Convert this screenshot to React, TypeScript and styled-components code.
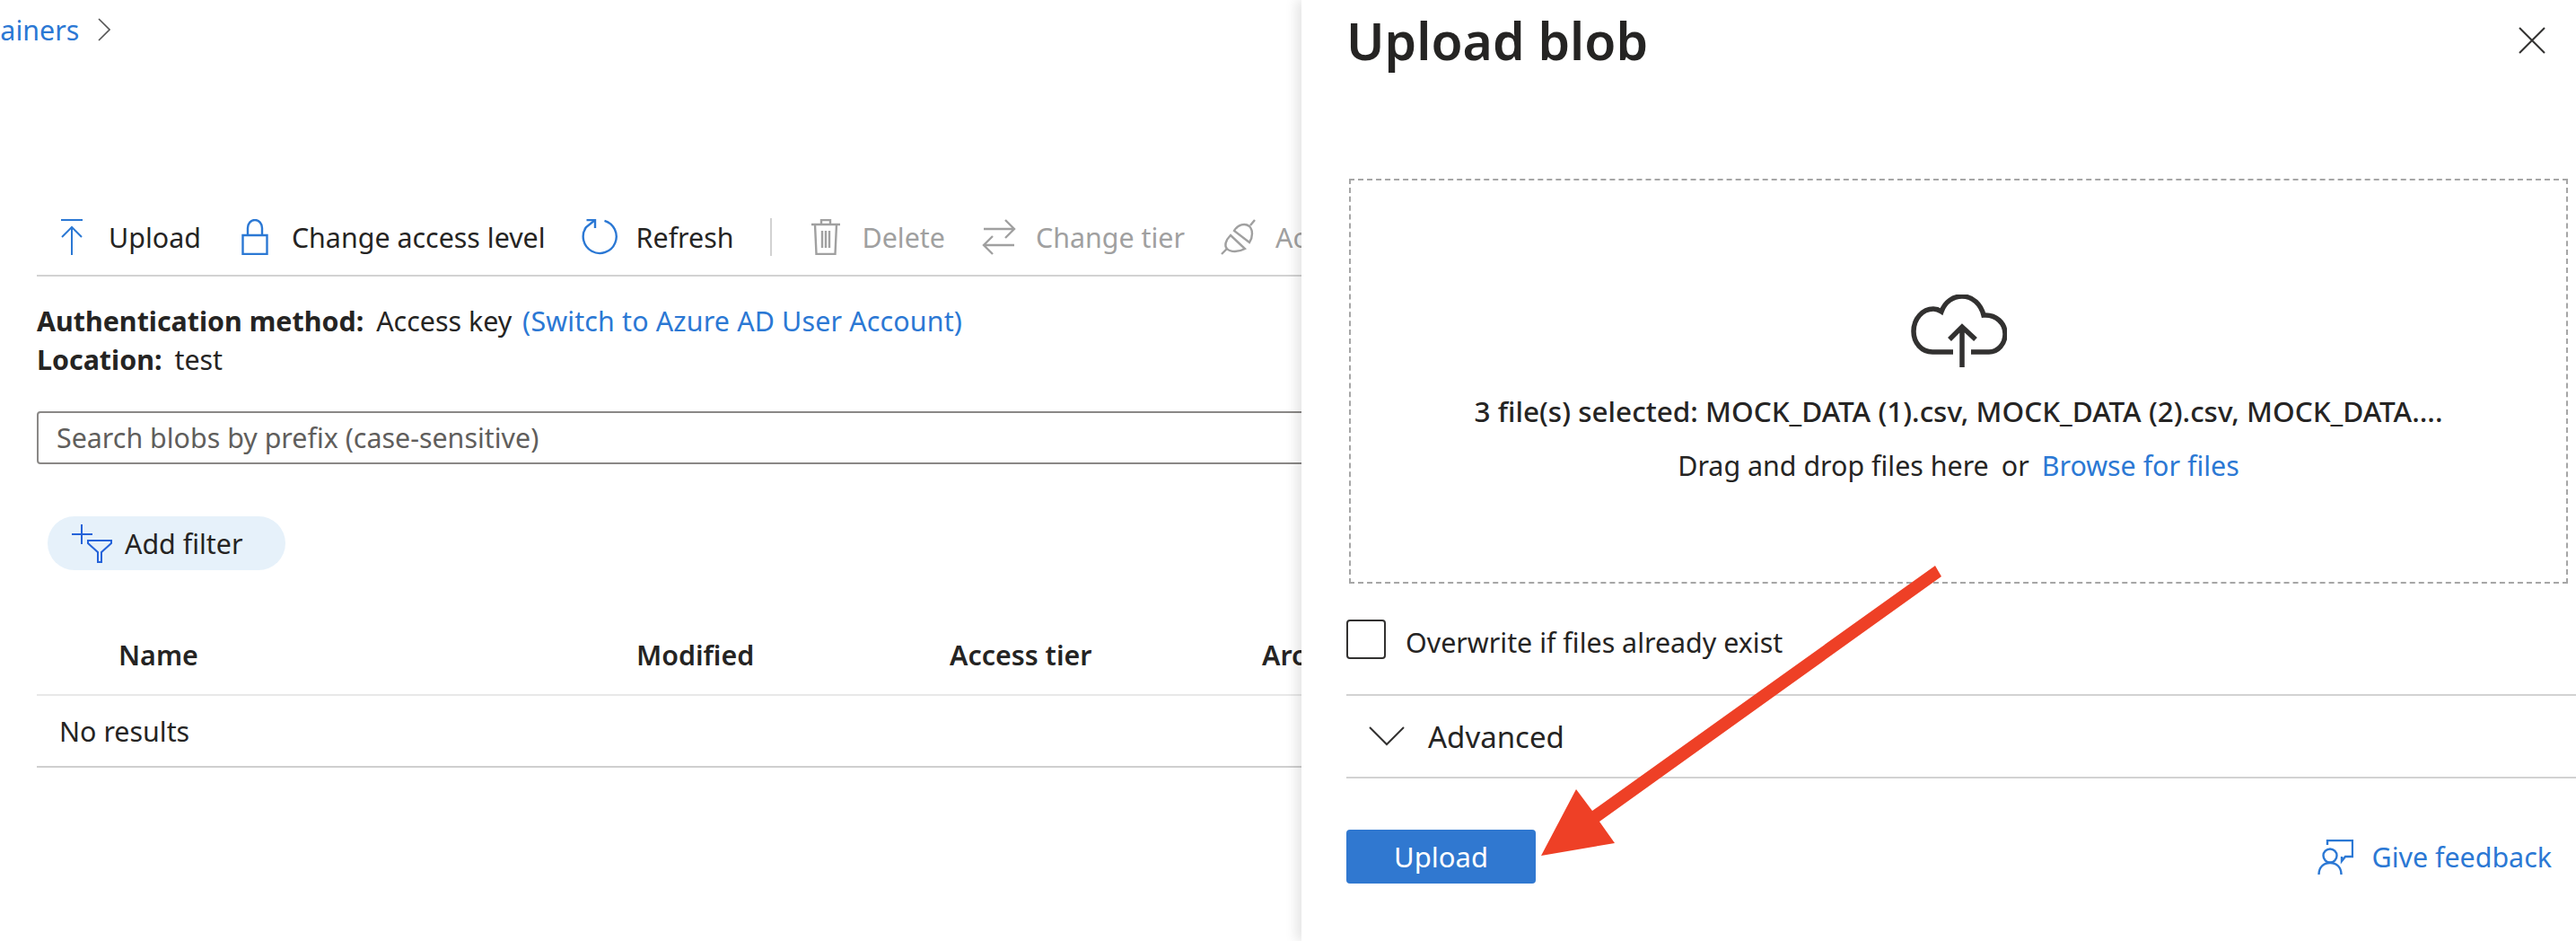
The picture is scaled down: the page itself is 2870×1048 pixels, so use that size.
import styled, { createGlobalStyle } from 'styled-components';

const GlobalStyle = createGlobalStyle`
  html, body {
    margin: 0;
    padding: 0;
    background: #fff;
  }
  * {
    box-sizing: border-box;
  }
`;

const UploadIcon = () => (
  <svg width="24" height="40" viewBox="0 0 24 40" fill="none" stroke="#2b78d4" strokeWidth="2">
    <path d="M0 1h24M12 40V9M1 20L12 9l11 11" />
  </svg>
);

const LockIcon = () => (
  <svg width="30" height="40" viewBox="0 0 30 40" fill="none" stroke="#2b78d4" strokeWidth="2.4">
    <path d="M1.5 18h27v21h-27zM7 18V10c0-5 3.500-9 8-9s8 4 8 9v8" />
  </svg>
);

const RefreshIcon = () => (
  <svg width="40" height="40" viewBox="0 0 40 40" fill="none" stroke="#2b78d4" strokeWidth="2.400">
    <path d="M25.500 1.800A18.500 18.500 0 1 1 5 9l10-8" />
    <path d="M5.500 1H15v9" />
  </svg>
);

const TrashIcon = () => (
  <svg width="32" height="40" viewBox="0 0 32 40" fill="none" stroke="#a0a0a0" strokeWidth="2.400">
    <path d="M0 6h32M4 6l1.500 33h21L28 6M11 6V1h10v5M12 13v19M16 13v19M20 13v19" />
  </svg>
);

const TierIcon = () => (
  <svg width="38" height="40" viewBox="0 0 38 40" fill="none" stroke="#a0a0a0" strokeWidth="2.400">
    <path d="M2 11h34M26 1l10 10-10 10M36 29H2M12 19L2 29l10 10" />
  </svg>
);

const PlugIcon = () => (
  <svg width="40" height="40" viewBox="0 0 40 40" fill="none" stroke="#a0a0a0" strokeWidth="2.400">
    <path d="M1 39l6-6M38 1l-5 6" />
    <path d="M15 13C19 6 27 4 32 8C36 12 36 20 32 26Z" />
    <path d="M11 18C5 24 4 30 7 33C11 37 20 37 27 33Z" />
  </svg>
);

const FilterIcon = () => (
  <svg width="45" height="43" viewBox="0 0 45 43" fill="none" stroke="#2563d9" strokeWidth="2">
    <path d="M0 11h23M11 0v22M18 18h26v3L33 31v11h-4V31L18 21z" />
  </svg>
);

const CloudIcon = () => (
  <svg width="107" height="81" viewBox="0 0 107 81" fill="none" stroke="#323130" strokeWidth="5.500">
    <path d="M47 64H24C12 64 3 54 3 41C3 27 13 16 25 16C28 16 31 17 34 19C38 8 47 2 57 2C69 2 78 11 81 23C95 22 105 32 105 44C105 55 97 64 87 64H67" />
    <path d="M57 81V37M43 50L57 36l15 14" />
  </svg>
);

const CloseIcon = () => (
  <svg width="30" height="30" viewBox="0 0 30 30" fill="none" stroke="#323130" strokeWidth="2">
    <path d="M1 1l28 28M29 1L1 29" />
  </svg>
);

const ChevronDownIcon = () => (
  <svg width="40" height="22" viewBox="0 0 40 22" fill="none" stroke="#323130" strokeWidth="2">
    <path d="M1 1l19 19L39 1" />
  </svg>
);

const ChevronRightIcon = () => (
  <svg width="14" height="26" viewBox="0 0 14 26" fill="none" stroke="#555" strokeWidth="1.600">
    <path d="M1 1l12 12L1 25" />
  </svg>
);

const FeedbackIcon = () => (
  <svg width="40" height="39" viewBox="0 0 40 39" fill="none" stroke="#2b78d4" strokeWidth="2.400">
    <path d="M11 6V1h28v18h-8l-4 5v-5" />
    <circle cx="14" cy="18" r="7.500" />
    <path d="M1.500 39c0-8 5-13 12.500-13s12.500 5 12.500 13" />
  </svg>
);

const Arrow = () => (
  <ArrowLayer width="480" height="350" viewBox="1700 620 480 350">
    <polygon
      points="2156,630 2163,642 1782,915 1799,939 1717,953 1756,879 1774,903"
      fill="#ee4026"
    />
  </ArrowLayer>
);

function App() {
  return (
    <Page>
      <GlobalStyle />
      <Main>
        <Content>
          <Breadcrumb>
            <BreadcrumbLink>Containers</BreadcrumbLink>
            <ChevronRightIcon />
          </Breadcrumb>
          <Toolbar>
            <ToolItem>
              <ToolIcon><UploadIcon /></ToolIcon>
              Upload
            </ToolItem>
            <ToolItem>
              <ToolIcon><LockIcon /></ToolIcon>
              Change access level
            </ToolItem>
            <ToolItem>
              <ToolIcon><RefreshIcon /></ToolIcon>
              Refresh
            </ToolItem>
            <ToolSeparator />
            <ToolItem $disabled>
              <ToolIcon><TrashIcon /></ToolIcon>
              Delete
            </ToolItem>
            <ToolItem $disabled>
              <ToolIcon><TierIcon /></ToolIcon>
              Change tier
            </ToolItem>
            <ToolItem $disabled>
              <ToolIcon><PlugIcon /></ToolIcon>
              Acquire lease
            </ToolItem>
          </Toolbar>
          <Info>
            <InfoLine>
              <InfoLabel>Authentication method:</InfoLabel>
              Access key <InfoLink>(Switch to Azure AD User Account)</InfoLink>
            </InfoLine>
            <InfoLine>
              <InfoLabel>Location:</InfoLabel>
              test
            </InfoLine>
          </Info>
          <SearchInput placeholder="Search blobs by prefix (case-sensitive)" readOnly />
          <FilterPill>
            <FilterIcon />
            Add filter
          </FilterPill>
          <TableHead>
            <HeadCell>Name</HeadCell>
            <HeadCell>Modified</HeadCell>
            <HeadCell>Access tier</HeadCell>
            <HeadCell>Archive status</HeadCell>
          </TableHead>
          <EmptyRow>No results</EmptyRow>
        </Content>
      </Main>
      <Panel>
        <PanelHeader>
          <PanelTitle>Upload blob</PanelTitle>
          <CloseIcon />
        </PanelHeader>
        <DropZone>
          <CloudIcon />
          <SelectedFiles>
            3 file(s) selected: MOCK_DATA (1).csv, MOCK_DATA (2).csv, MOCK_DATA....
          </SelectedFiles>
          <DropHint>
            Drag and drop files here<DropOr>or</DropOr><Link>Browse for files</Link>
          </DropHint>
        </DropZone>
        <CheckRow>
          <CheckBox />
          <CheckLabel>Overwrite if files already exist</CheckLabel>
        </CheckRow>
        <AdvancedRow>
          <ChevronDownIcon />
          Advanced
        </AdvancedRow>
        <PanelFooter>
          <PrimaryButton>Upload</PrimaryButton>
          <Feedback>
            <FeedbackIcon />
            Give feedback
          </Feedback>
        </PanelFooter>
      </Panel>
      <Arrow />
    </Page>
  );
}

const Page = styled.div`
  position: relative;
  display: flex;
  width: 2870px;
  height: 1048px;
  overflow: hidden;
  background: #fff;
  color: #252423;
  font-family: 'Noto Sans', 'Open Sans', sans-serif;
  font-size: 30.4px;
`;

const Main = styled.div`
  width: 1450px;
  flex-shrink: 0;
  overflow: hidden;
`;

const Content = styled.div`
  width: 1700px;
  padding-left: 41px;
`;

const Breadcrumb = styled.div`
  display: flex;
  align-items: center;
  gap: 21px;
  height: 66px;
  margin-left: -108px;
`;

const BreadcrumbLink = styled.span`
  color: #2b78d4;
`;

const Toolbar = styled.div`
  display: flex;
  align-items: center;
  gap: 40px;
  height: 78px;
  margin-top: 164px;
  padding: 0 0 8px 19px;
  border-bottom: 2px solid #d2d2d2;
`;

const ToolItem = styled.div<{ $disabled?: boolean }>`
  display: flex;
  align-items: center;
  gap: 21px;
  white-space: nowrap;
  color: ${(p) => (p.$disabled ? '#a0a0a0' : '#252423')};
`;

const ToolIcon = styled.span`
  display: flex;
  justify-content: center;
  width: 40px;
`;

const ToolSeparator = styled.div`
  flex-shrink: 0;
  width: 2px;
  height: 42px;
  background: #d2d2d2;
`;

const Info = styled.div`
  padding-top: 28px;
  line-height: 43px;
`;

const InfoLine = styled.div`
  white-space: nowrap;
`;

const InfoLabel = styled.b`
  margin-right: 14px;
  font-weight: 700;
`;

const Link = styled.span`
  color: #2b78d4;
`;

const InfoLink = styled(Link)`
  margin-left: 4px;
  letter-spacing: 0.15px;
`;

const SearchInput = styled.input`
  display: block;
  width: 1500px;
  height: 59px;
  margin-top: 36px;
  padding: 0 20px;
  border: 2px solid #8a8886;
  border-radius: 4px;
  outline: none;
  font-family: inherit;
  font-size: 30.4px;
  color: #605e5c;

  &::placeholder {
    color: #605e5c;
    opacity: 1;
  }
`;

const FilterPill = styled.div`
  display: flex;
  align-items: center;
  gap: 14px;
  width: 265px;
  height: 60px;
  margin: 58px 0 0 12px;
  padding-left: 27px;
  border-radius: 30px;
  background: #e6f1fa;
`;

const TableHead = styled.div`
  display: grid;
  grid-template-columns: 577px 349px 348px 1fr;
  align-items: center;
  height: 90px;
  margin-top: 50px;
  padding-left: 91px;
  border-bottom: 2px solid #e8e8e8;
`;

const HeadCell = styled.div`
  font-weight: 600;
  white-space: nowrap;
`;

const EmptyRow = styled.div`
  display: flex;
  align-items: center;
  height: 80px;
  padding-left: 25px;
  border-bottom: 2px solid #cfcfcf;
`;

const Panel = styled.div`
  flex: 1;
  min-width: 0;
  padding: 0 9px 0 50px;
  background: #fff;
  box-shadow: -6px 0 12px rgba(0, 0, 0, 0.1);
  z-index: 1;
`;

const PanelHeader = styled.div`
  display: flex;
  align-items: center;
  justify-content: space-between;
  height: 90px;
  padding-right: 25px;
`;

const PanelTitle = styled.h1`
  margin: 0;
  font-size: 57px;
  font-weight: 600;
  line-height: 90px;
`;

const DropZone = styled.div`
  display: flex;
  flex-direction: column;
  align-items: center;
  height: 451px;
  margin: 109px 0 0 3px;
  padding-top: 127px;
  border: 2px dashed #a6a6a6;
`;

const SelectedFiles = styled.div`
  margin-top: 24px;
  font-size: 31.5px;
  font-weight: 500;
  line-height: 50px;
  white-space: nowrap;
`;

const DropHint = styled.div`
  margin-top: 11px;
  line-height: 50px;
  white-space: nowrap;
`;

const DropOr = styled.span`
  margin: 0 14px;
`;

const CheckRow = styled.div`
  display: flex;
  align-items: center;
  gap: 22px;
  height: 44px;
  margin-top: 40px;
`;

const CheckBox = styled.div`
  width: 44px;
  height: 44px;
  border: 2px solid #323130;
  border-radius: 4px;
`;

const CheckLabel = styled.span`
  margin-top: 6px;
`;

const AdvancedRow = styled.div`
  display: flex;
  align-items: center;
  gap: 26px;
  height: 94px;
  margin: 39px -9px 0 0;
  padding-left: 25px;
  border-top: 2px solid #d2d2d2;
  border-bottom: 2px solid #d2d2d2;
  font-size: 33px;
`;

const PanelFooter = styled.div`
  display: flex;
  align-items: center;
  justify-content: space-between;
  margin-top: 57px;
  padding-right: 18px;
`;

const PrimaryButton = styled.button`
  width: 211px;
  height: 60px;
  border: none;
  border-radius: 4px;
  background: #3078d0;
  color: #fff;
  font-family: inherit;
  font-size: 31px;
`;

const Feedback = styled.div`
  display: flex;
  align-items: center;
  gap: 21px;
  color: #2b78d4;
`;

const ArrowLayer = styled.svg`
  position: absolute;
  left: 1700px;
  top: 620px;
  z-index: 2;
`;

export default App;
